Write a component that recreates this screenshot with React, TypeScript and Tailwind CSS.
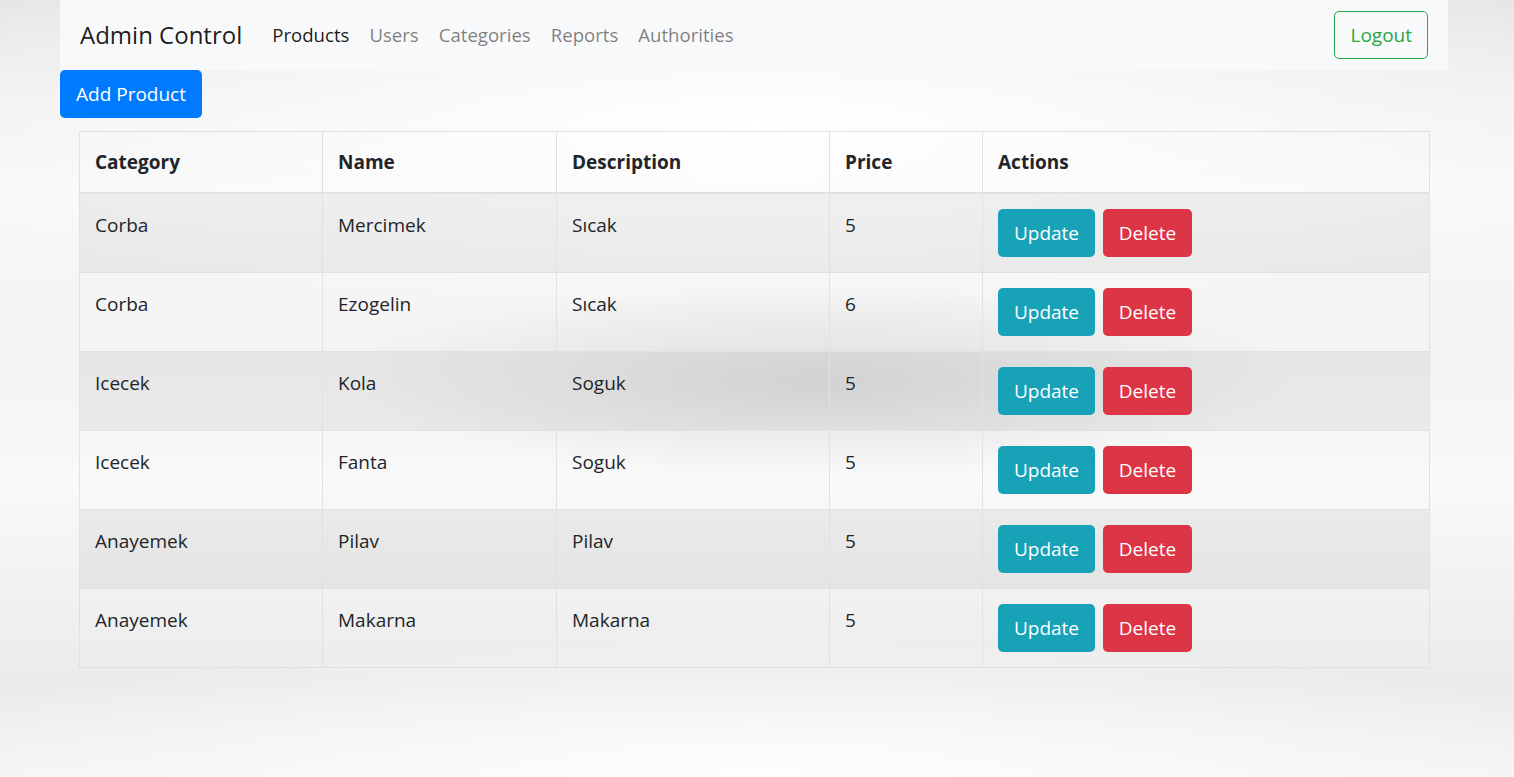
import React from 'react';

interface Product {
  category: string;
  name: string;
  description: string;
  price: number;
}

const products: Product[] = [
  { category: 'Corba', name: 'Mercimek', description: 'Sıcak', price: 5 },
  { category: 'Corba', name: 'Ezogelin', description: 'Sıcak', price: 6 },
  { category: 'Icecek', name: 'Kola', description: 'Soguk', price: 5 },
  { category: 'Icecek', name: 'Fanta', description: 'Soguk', price: 5 },
  { category: 'Anayemek', name: 'Pilav', description: 'Pilav', price: 5 },
  { category: 'Anayemek', name: 'Makarna', description: 'Makarna', price: 5 },
];

const navLinks = ['Products', 'Users', 'Categories', 'Reports', 'Authorities'];

const App: React.FC = () => {
  return (
    <div
      className="min-h-screen w-full bg-[radial-gradient(ellipse_480px_95px_at_54%_49%,#dedede,transparent),radial-gradient(ellipse_1000px_190px_at_50%_16%,#ffffff,transparent),radial-gradient(ellipse_900px_140px_at_50%_100%,#fdfdfd,transparent),linear-gradient(to_bottom,#e6e6e6,#f8f8f8_25%,#f3f3f3_45%,#f9f9f9_62%,#ebebeb_88%,#f4f4f4)] text-[#212529]"
      style={{ fontFamily: '"Open Sans", "Noto Sans", sans-serif' }}
    >
      <div className="ml-[60px] w-[1388px]">
        {/* Navbar */}
        <nav className="flex h-[70px] items-center bg-[#f8f9fa] px-[20px]">
          <span className="mr-[20px] text-[24px] leading-[36px] text-[rgba(0,0,0,0.9)]">
            Admin Control
          </span>
          <ul className="flex items-center">
            {navLinks.map((link, i) => (
              <li key={link}>
                <a
                  href="#"
                  className={`px-[10px] text-[18.6px] leading-[32px] ${
                    i === 0 ? 'text-[rgba(0,0,0,0.9)]' : 'text-[rgba(0,0,0,0.5)]'
                  }`}
                >
                  {link}
                </a>
              </li>
            ))}
          </ul>
          <button className="ml-auto h-[48px] rounded-[5px] border border-[#28a745] px-[15px] text-[19px] text-[#28a745]">
            Logout
          </button>
        </nav>

        <button className="h-[48px] rounded-[5px] bg-[#007bff] px-[16px] text-[19px] text-white">
          Add Product
        </button>

        {/* Products table */}
        <table className="mt-[13px] ml-[19px] w-[1350px] table-fixed border-collapse border border-[#dee2e6] text-[19px]">
          <colgroup>
            <col className="w-[243px]" />
            <col className="w-[234px]" />
            <col className="w-[273px]" />
            <col className="w-[153px]" />
            <col className="w-[447px]" />
          </colgroup>
          <thead>
            <tr>
              {['Category', 'Name', 'Description', 'Price', 'Actions'].map((h) => (
                <th
                  key={h}
                  className="border border-b-2 border-[#dee2e6] px-[15px] pt-[15px] pb-[14px] text-left align-top font-bold leading-[31px]"
                >
                  {h}
                </th>
              ))}
            </tr>
          </thead>
          <tbody>
            {products.map((p, i) => (
              <tr key={i} className={i % 2 === 0 ? 'bg-[rgba(0,0,0,0.05)]' : ''}>
                <td className="border border-[#dee2e6] px-[15px] pt-[16px] pb-[14px] align-top leading-[30px]">{p.category}</td>
                <td className="border border-[#dee2e6] px-[15px] pt-[16px] pb-[14px] align-top leading-[30px]">{p.name}</td>
                <td className="border border-[#dee2e6] px-[15px] pt-[16px] pb-[14px] align-top leading-[30px]">{p.description}</td>
                <td className="border border-[#dee2e6] px-[15px] pt-[16px] pb-[14px] align-top leading-[30px]">{p.price}</td>
                <td className="border border-[#dee2e6] px-[15px] py-[15px] align-top">
                  <div className="flex gap-[8px]">
                    <button className="h-[48px] w-[97px] rounded-[5px] bg-[#17a2b8] text-[19px] text-white">
                      Update
                    </button>
                    <button className="h-[48px] w-[89px] rounded-[5px] bg-[#dc3545] text-[19px] text-white">
                      Delete
                    </button>
                  </div>
                </td>
              </tr>
            ))}
          </tbody>
        </table>
      </div>
    </div>
  );
};

export default App;
